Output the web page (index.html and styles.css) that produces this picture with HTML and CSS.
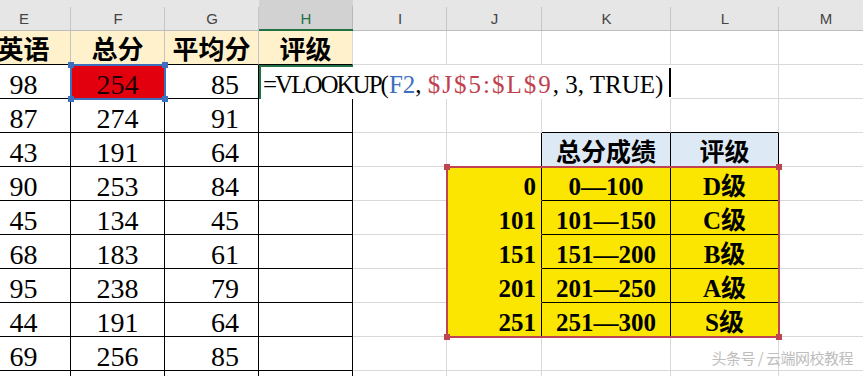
FILE: index.html
```html
<!DOCTYPE html>
<html lang="zh-CN">
<head>
<meta charset="utf-8">
<title>VLOOKUP 评级</title>
<link rel="stylesheet" href="styles.css">
</head>
<body>
<div class="stage">
  <div class="sheet">
    <!-- column headers -->
    <div class="ch">E</div><div class="ch">F</div><div class="ch">G</div><div class="ch sel">H</div><div class="ch">I</div><div class="ch">J</div><div class="ch">K</div><div class="ch">L</div><div class="ch">M</div>
    <!-- row 1 -->
    <div class="c hd">英语</div><div class="c hd">总分</div><div class="c hd">平均分</div><div class="c hd hd-last">评级</div><div class="c"></div><div class="c"></div><div class="c"></div><div class="c"></div><div class="c"></div>
    <!-- row 2 -->
    <div class="c t n ctr">98</div><div class="c t n ctr red">254</div><div class="c t n rt">85</div>
    <div class="ed"><span class="f-fn">=VLOOKUP(</span><span class="f-b">F2</span>, <span class="f-r">$J$5:$L$9</span>, 3, TRUE)</div>
    <div class="c"></div><div class="c"></div>
    <!-- row 3 -->
    <div class="c t n ctr">87</div><div class="c t n ctr">274</div><div class="c t n rt">91</div><div class="c t"></div><div class="c"></div><div class="c"></div><div class="c top-k"></div><div class="c top-k"></div><div class="c"></div>
    <!-- row 4 -->
    <div class="c t n ctr">43</div><div class="c t n ctr">191</div><div class="c t n rt">64</div><div class="c t"></div><div class="c"></div><div class="c edge-r"></div><div class="c bh">总分成绩</div><div class="c bh">评级</div><div class="c"></div>
    <!-- row 5 -->
    <div class="c t n ctr">90</div><div class="c t n ctr">253</div><div class="c t n rt">84</div><div class="c t"></div><div class="c"></div><div class="c y yj">0</div><div class="c y yk">0—100</div><div class="c y yl">D级</div><div class="c"></div>
    <!-- row 6 -->
    <div class="c t n ctr">45</div><div class="c t n ctr">134</div><div class="c t n rt">45</div><div class="c t"></div><div class="c"></div><div class="c y yj">101</div><div class="c y yk">101—150</div><div class="c y yl">C级</div><div class="c"></div>
    <!-- row 7 -->
    <div class="c t n ctr">68</div><div class="c t n ctr">183</div><div class="c t n rt">61</div><div class="c t"></div><div class="c"></div><div class="c y yj">151</div><div class="c y yk">151—200</div><div class="c y yl">B级</div><div class="c"></div>
    <!-- row 8 -->
    <div class="c t n ctr">95</div><div class="c t n ctr">238</div><div class="c t n rt">79</div><div class="c t"></div><div class="c"></div><div class="c y yj">201</div><div class="c y yk">201—250</div><div class="c y yl">A级</div><div class="c"></div>
    <!-- row 9 -->
    <div class="c t n ctr">44</div><div class="c t n ctr">191</div><div class="c t n rt">64</div><div class="c t"></div><div class="c"></div><div class="c y yj">251</div><div class="c y yk">251—300</div><div class="c y yl">S级</div><div class="c"></div>
    <!-- row 10 -->
    <div class="c t n ctr">69</div><div class="c t n ctr">256</div><div class="c t n rt">85</div><div class="c t"></div><div class="c"></div><div class="c"></div><div class="c"></div><div class="c"></div><div class="c"></div>
    <!-- row 11 -->
    <div class="c t"></div><div class="c t"></div><div class="c t"></div><div class="c t"></div><div class="c"></div><div class="c"></div><div class="c"></div><div class="c"></div><div class="c"></div>
  </div>

  <div class="sel-f">
    <span class="hnd h-tl"></span><span class="hnd h-tr"></span><span class="hnd h-bl"></span><span class="hnd h-br"></span>
  </div>
  <div class="sel-r">
    <span class="hnd h-tl"></span><span class="hnd h-tr"></span><span class="hnd h-bl"></span><span class="hnd h-br"></span>
  </div>
  <div class="mark">头条号 / 云端网校教程</div>
</div>
</body>
</html>
```
FILE: styles.css
```css
* { box-sizing: border-box; }
html, body { margin: 0; padding: 0; }
body {
  width: 863px;
  height: 376px;
  overflow: hidden;
  background: #fff;
  font-family: "Liberation Serif", "Noto Sans CJK SC", serif;
  color: #000;
}
.stage {
  position: relative;
  width: 863px;
  height: 376px;
  overflow: hidden;
}
.sheet {
  display: grid;
  grid-template-columns: 94px 94px 94px 94px 94px 95px 129px 108px 94px;
  grid-template-rows: 31px repeat(10, 34px) 20px;
  margin-left: -23px;
}
/* column headers */
.ch {
  background: linear-gradient(#c6c6c6, #c6c6c6) right bottom / 1px 23px no-repeat, #e6e6e6;
  border-bottom: 1px solid #bdbdbd;
  font: 15px "Liberation Sans", sans-serif;
  color: #444;
  text-align: center;
  padding-top: 9px;
  line-height: 20px;
}
.ch.sel {
  background: linear-gradient(#b9b9b9, #b9b9b9) right bottom / 1px 23px no-repeat, #d2d2d2;
  color: #217346;
  border-bottom: 2px solid #217346;
}
/* cells */
.c {
  border-right: 1px solid #d9d9d9;
  border-bottom: 1px solid #d9d9d9;
  white-space: nowrap;
}
.t { border-right-color: #000; border-bottom-color: #000; }
.n {
  font-size: 28px;
  line-height: 30px;
  padding-top: 5px;
}
.ctr { text-align: center; }
.rt { text-align: right; padding-right: 19px; }
.red { background: #e2000f; color: #1c0000; }

.hd {
  background: #fff1cb;
  font: 700 26px "Noto Sans CJK SC", sans-serif;
  text-align: center;
  line-height: 34px;
  border-right-color: #c4c4c4;
  border-bottom-color: #000;
}
.hd-last { border-right-color: #d9d9d9; }

/* formula editor in H2 */
.ed {
  grid-column: span 4;
  background:
    linear-gradient(#217346, #217346) left top / 2px 100% no-repeat,
    linear-gradient(#217346, #217346) left top / 94px 2px no-repeat,
    linear-gradient(#000, #000) right 0 top 3px / 2px 29px no-repeat,
    #fff;
  font-size: 25px;
  line-height: 32px;
  padding: 4px 0 0 4px;
  white-space: nowrap;
}
.f-fn { letter-spacing: -2px; margin-right: 2px; }
.f-b { color: #3c6fbe; }
.f-r { color: #c0414e; letter-spacing: 2px; }

/* lookup table */
.top-k { border-bottom-color: #000; }
.edge-r { border-right-color: #000; }
.bh {
  background: #ddeaf6;
  font: 700 25px "Noto Sans CJK SC", sans-serif;
  text-align: center;
  line-height: 34px;
  border-right-color: #000;
}
.y {
  background: #fae600;
  font-weight: 700;
  font-size: 25px;
  line-height: 28px;
  padding-top: 6px;
}
.yj { text-align: right; padding-right: 5px; border-right-color: #000; border-bottom-color: #fae600; }
.yk { text-align: center; border-right-color: #000; border-bottom-color: #000; }
.yl { text-align: center; border-right-color: #000; border-bottom-color: #000; }

/* overlays */
.sel-f, .sel-r { position: absolute; }
.sel-f {
  left: 70px; top: 64px; width: 96px; height: 36px;
  border: 2px solid #3c6fbe;
}
.sel-r {
  left: 446px; top: 166px; width: 334px; height: 172px;
  border: 2px solid #bd4450;
}
.hnd { position: absolute; width: 6px; height: 6px; }
.sel-f .hnd { background: #3c6fbe; }
.sel-r .hnd { background: #bd4450; }
.h-tl { left: -4px; top: -4px; }
.h-tr { right: -4px; top: -4px; }
.h-bl { left: -4px; bottom: -4px; }
.h-br { right: -4px; bottom: -4px; }

.mark {
  position: absolute;
  right: 10px;
  top: 348px;
  font: 15px "Noto Sans CJK SC", sans-serif;
  letter-spacing: -0.5px;
  line-height: 20px;
  color: #bdbdbd;
}
```
